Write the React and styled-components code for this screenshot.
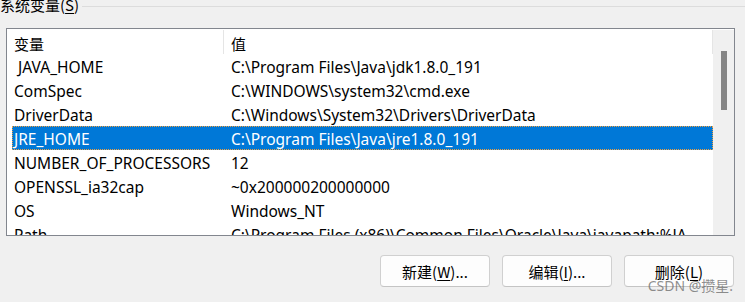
import React from 'react';
import styled, { createGlobalStyle } from 'styled-components';

const GlobalStyle = createGlobalStyle`
  html, body {
    margin: 0;
    padding: 0;
    background: #f0f0f0;
    overflow: hidden;
  }
  body {
    font-family: "Noto Sans", "Noto Sans CJK SC", sans-serif;
    font-size: 15.5px;
    color: #000;
  }
`

const Page = styled.div`
  width: 745px;
  height: 302px;
  display: flex;
  flex-direction: column;
  background: #f0f0f0;
  overflow: hidden;
`

const GroupHeader = styled.div`
  display: flex;
  align-items: center;
  gap: 3px;
  height: 14px;
`

const GroupTitle = styled.span`
  font-family: "Noto Sans CJK SC", sans-serif;
  font-size: 15px;
  line-height: 14px;
  margin-top: -4px;
  white-space: nowrap;
  color: #000;
`

const GroupLine = styled.div`
  flex: 1;
  height: 1px;
  background: #dcdcdc;
  margin-top: -1px;
`

const Underlined = styled.span`
  text-decoration: underline;
  text-underline-offset: 2px;
`

const ListBox = styled.div`
  margin: 14px 10px 0 6px;
  height: 206px;
  border: 1px solid #82868e;
  background: #fff;
  display: flex;
  overflow: hidden;
`

const ListContent = styled.div`
  flex: 1;
  display: flex;
  flex-direction: column;
  padding: 1px 0 0 5px;
`

const HeaderRow = styled.div`
  display: grid;
  grid-template-columns: 212px 1fr;
  height: 26px;
  font-family: "Noto Sans CJK SC", sans-serif;
  font-size: 15px;
`

const HeaderCell = styled.div`
  display: flex;
  align-items: center;
  padding: 3px 0 0 ${p => (p.$value ? '7px' : '2px')};
  border-right: 1px solid #e5e5e5;
  box-sizing: border-box;
`

const Row = styled.div`
  display: grid;
  grid-template-columns: 212px 1fr;
  height: 24px;
  box-sizing: border-box;
  background: ${p => (p.$selected ? '#0078d7' : 'transparent')};
  color: ${p => (p.$selected ? '#fff' : '#000')};
  outline: ${p => (p.$selected ? '1px dotted #f0a040' : 'none')};
  outline-offset: -1px;
  white-space: nowrap;
`

const Cell = styled.div`
  height: 24px;
  box-sizing: border-box;
  padding: 3px 0 0 ${p => (p.$value ? '7px' : '2px')};
  line-height: 21px;
  overflow: hidden;
  white-space: pre;
`

const ScrollBar = styled.div`
  width: 21px;
  margin-top: 1px;
  background: #f0f0f0;
  display: flex;
  justify-content: center;
  padding-top: 21px;
  box-sizing: border-box;
`

const Thumb = styled.div`
  width: 6px;
  height: 59px;
  background: #858585;
  margin-left: 1px;
`

const ButtonBar = styled.div`
  display: flex;
  justify-content: flex-end;
  gap: 12px;
  margin: 19px 11px 0 0;
  position: relative;
`

const Button = styled.button`
  width: 110px;
  height: 32px;
  background: #fdfdfd;
  border: 1px solid #d0d0d0;
  border-bottom-color: #c4c4c4;
  border-radius: 4px;
  font-family: "Noto Sans CJK SC", sans-serif;
  font-size: 15px;
  color: #000;
  padding: 0;
`

const Watermark = styled.span`
  position: absolute;
  right: 1px;
  bottom: -8px;
  font-family: "Noto Sans", "Noto Sans CJK SC", sans-serif;
  font-size: 14px;
  color: rgba(105, 105, 105, 0.75);
  pointer-events: none;
`

const vars = [
  [' JAVA_HOME', 'C:\\Program Files\\Java\\jdk1.8.0_191'],
  ['ComSpec', 'C:\\WINDOWS\\system32\\cmd.exe'],
  ['DriverData', 'C:\\Windows\\System32\\Drivers\\DriverData'],
  ['JRE_HOME', 'C:\\Program Files\\Java\\jre1.8.0_191'],
  ['NUMBER_OF_PROCESSORS', '12'],
  ['OPENSSL_ia32cap', '~0x200000200000000'],
  ['OS', 'Windows_NT'],
  ['Path', 'C:\\Program Files (x86)\\Common Files\\Oracle\\Java\\javapath;%JA'],
]

export default function App() {
  return (
    <Page>
      <GlobalStyle />
      <GroupHeader>
        <GroupTitle>
          系统变量(<Underlined>S</Underlined>)
        </GroupTitle>
        <GroupLine />
      </GroupHeader>
      <ListBox>
        <ListContent>
          <HeaderRow>
            <HeaderCell>变量</HeaderCell>
            <HeaderCell $value>值</HeaderCell>
          </HeaderRow>
          {vars.map(([name, value]) => (
            <Row key={name} $selected={name === 'JRE_HOME'}>
              <Cell>{name}</Cell>
              <Cell $value>{value}</Cell>
            </Row>
          ))}
        </ListContent>
        <ScrollBar>
          <Thumb />
        </ScrollBar>
      </ListBox>
      <ButtonBar>
        <Button>新建(<Underlined>W</Underlined>)...</Button>
        <Button>编辑(<Underlined>I</Underlined>)...</Button>
        <Button>删除(<Underlined>L</Underlined>)</Button>
        <Watermark>CSDN @攒星.</Watermark>
      </ButtonBar>
    </Page>
  );
}
